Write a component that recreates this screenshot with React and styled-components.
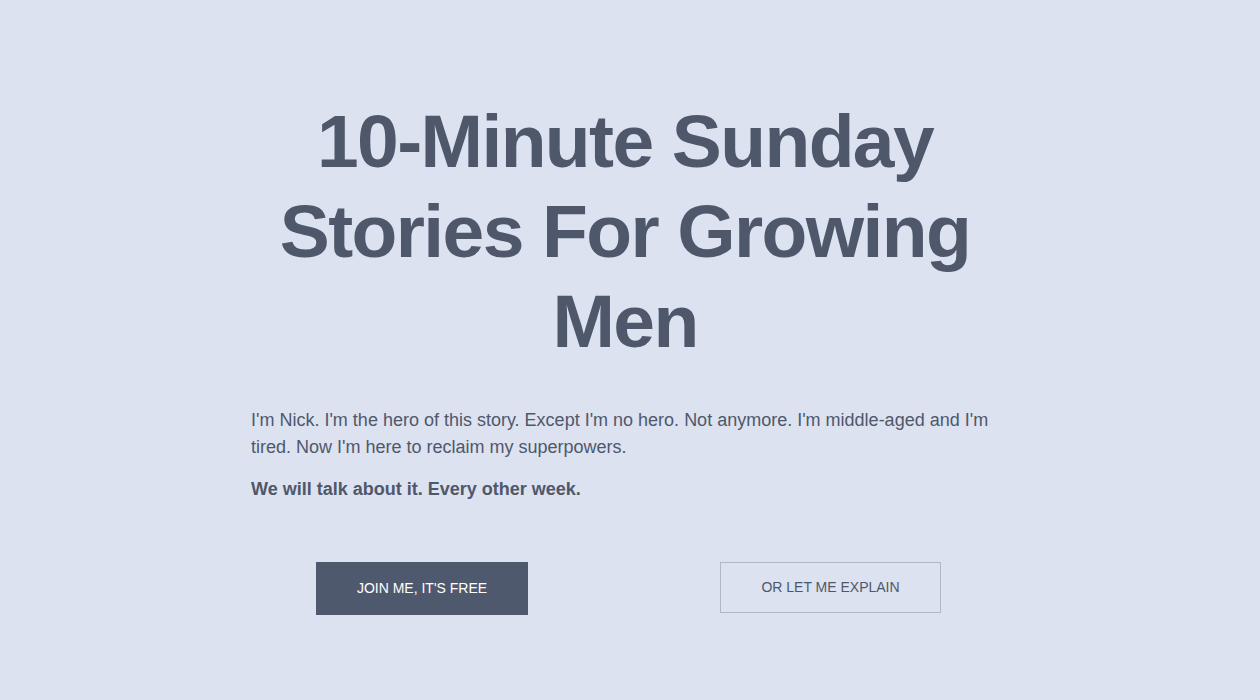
import React from 'react';
import styled, { createGlobalStyle } from 'styled-components';

const GlobalStyle = createGlobalStyle`
  html, body {
    margin: 0;
    padding: 0;
    background: #dce2f0;
  }
  body {
    font-family: "Liberation Sans", Arial, sans-serif;
    color: #4f586b;
  }
`;

export default function App() {
  return (
    <>
      <GlobalStyle />
      <Page>
        <Hero>
          <Title>10-Minute Sunday Stories For Growing Men</Title>
          <Intro>
            I'm Nick. I'm the hero of this story. Except I'm no hero. Not anymore.
            I'm middle-aged and I'm tired. Now I'm here to reclaim my superpowers.
          </Intro>
          <Intro bold>We will talk about it. Every other week.</Intro>
          <Actions>
            <Button primary>JOIN ME, IT'S FREE</Button>
            <Button>OR LET ME EXPLAIN</Button>
          </Actions>
        </Hero>
      </Page>
    </>
  );
}

const Page = styled.main`
  min-height: 700px;
  padding-top: 96px;
  box-sizing: border-box;
`;

const Hero = styled.section`
  width: 758px;
  margin: 0 auto;
`;

const Title = styled.h1`
  margin: 0 10px 41px 0;
  font-size: 75px;
  line-height: 90px;
  font-weight: 700;
  letter-spacing: -1.6px;
  text-align: center;
  color: #4f586b;
`;

const Intro = styled.p`
  margin: 0 0 15px;
  font-size: 18px;
  line-height: 27px;
  font-weight: ${(p) => (p.bold ? 700 : 400)};
`;

const Actions = styled.div`
  display: flex;
  justify-content: space-between;
  align-items: flex-start;
  padding: 0 68px 0 65px;
  margin-top: 59px;
`;

const Button = styled.button`
  font-family: "Liberation Sans", Arial, sans-serif;
  font-size: 14px;
  cursor: pointer;
  box-sizing: border-box;
  width: ${(p) => (p.primary ? '212px' : '221px')};
  height: ${(p) => (p.primary ? '53px' : '51px')};
  padding: 0 0 1px;
  background: ${(p) => (p.primary ? '#4f596d' : 'transparent')};
  color: ${(p) => (p.primary ? '#ffffff' : '#4f586b')};
  border: 1px solid ${(p) => (p.primary ? '#4f596d' : '#b0b7c7')};
`;
